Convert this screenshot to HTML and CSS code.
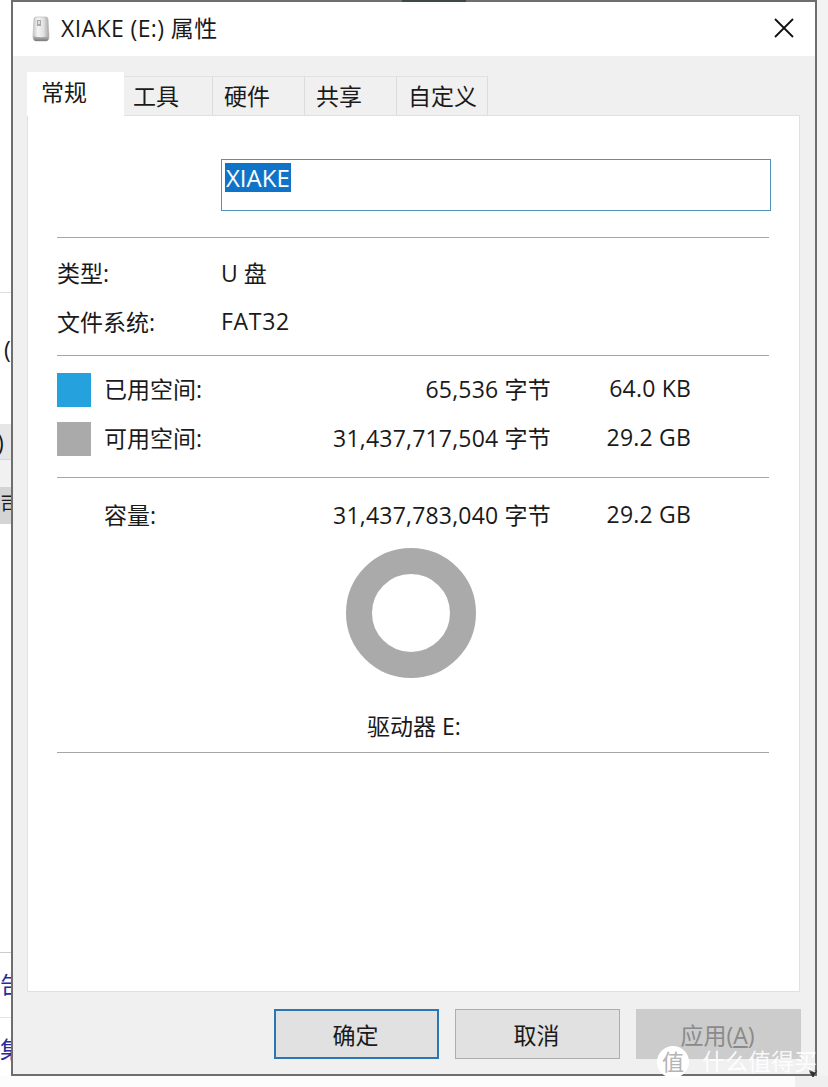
FILE: index.html
```html
<!DOCTYPE html>
<html lang="zh-CN">
<head>
    <meta charset="UTF-8">
    <meta name="viewport" content="width=device-width, initial-scale=1.0">
    <title>XIAKE (E:) 属性</title>
    <link rel="stylesheet" href="styles.css">
</head>
<body>
    <div class="page">
        <!-- Window behind the dialog, only its right edge shows -->
        <div class="behind">
            <div class="behind-row behind-top"></div>
            <div class="behind-row behind-paren">(</div>
            <div class="behind-row behind-band">)</div>
            <div class="behind-row behind-gap"></div>
            <div class="behind-row behind-grey">司</div>
            <div class="behind-row behind-white"></div>
            <div class="behind-row behind-link">告</div>
            <div class="behind-row behind-link">集</div>
        </div>

        <div class="dialog">
            <div class="titlebar">
                <svg class="drive-icon" width="20" height="26" viewBox="0 0 20 26">
                    <defs>
                        <linearGradient id="driveBody" x1="0" y1="0" x2="1" y2="0">
                            <stop offset="0" stop-color="#c4c4c4"/>
                            <stop offset="0.3" stop-color="#f4f4f4"/>
                            <stop offset="0.65" stop-color="#e2e2e2"/>
                            <stop offset="1" stop-color="#a6a6a6"/>
                        </linearGradient>
                        <linearGradient id="driveBase" x1="0" y1="0" x2="0" y2="1">
                            <stop offset="0" stop-color="#b8b8b8"/>
                            <stop offset="1" stop-color="#7c7c7c"/>
                        </linearGradient>
                    </defs>
                    <path d="M5 1h10q2 0 2 2l1 17q0 5-3 5H5q-3 0-3-5L3 3q0-2 2-2z" fill="url(#driveBody)" stroke="#b4b4b4" stroke-width="0.6"/>
                    <path d="M2.3 20q7.700 2.500 15.400 0q.3 5-2.700 5H5q-3 0-2.700-5z" fill="url(#driveBase)"/>
                    <path d="M6 4h4v6H6z" fill="#a9a9a9"/>
                    <path d="M7 5h2v3H7z" fill="#dedede"/>
                </svg>
                <span class="title">XIAKE (E:) 属性</span>
                <svg class="close-icon" width="20" height="20" viewBox="0 0 20 20">
                    <path d="M1 1l18 18M19 1L1 19" stroke="#111" stroke-width="1.8" fill="none"/>
                </svg>
            </div>

            <div class="tabs">
                <div class="tab tab-active">常规</div>
                <div class="tab tab-tools">工具</div>
                <div class="tab">硬件</div>
                <div class="tab">共享</div>
                <div class="tab tab-last">自定义</div>
            </div>

            <div class="panel">
                <div class="name-box"><span class="selected">XIAKE</span></div>
                <div class="divider first-divider"></div>

                <div class="info-row"><span class="label">类型:</span><span>U 盘</span></div>
                <div class="info-row"><span class="label">文件系统:</span><span class="fs-name">FAT32</span></div>
                <div class="divider second-divider"></div>

                <div class="space-rows">
                    <div class="space-row">
                        <span class="swatch swatch-used"></span>
                        <span class="space-name">已用空间:</span>
                        <span class="bytes">65,536 字节</span>
                        <span class="size">64.0 KB</span>
                    </div>
                    <div class="space-row">
                        <span class="swatch swatch-free"></span>
                        <span class="space-name">可用空间:</span>
                        <span class="bytes">31,437,717,504 字节</span>
                        <span class="size">29.2 GB</span>
                    </div>
                </div>
                <div class="divider third-divider"></div>

                <div class="space-row capacity-row">
                    <span></span>
                    <span class="space-name">容量:</span>
                    <span class="bytes">31,437,783,040 字节</span>
                    <span class="size">29.2 GB</span>
                </div>

                <div class="ring-wrap"><div class="ring"></div></div>
                <div class="drive-label">驱动器 E:</div>
                <div class="divider"></div>
            </div>

            <div class="buttons">
                <button class="btn btn-default" type="button">确定</button>
                <button class="btn" type="button">取消</button>
                <button class="btn btn-disabled" type="button">应用(<u>A</u>)</button>
            </div>
        </div>

        <div class="behind-right"></div>
    </div>
    <div class="behind-bottom"></div>

    <div class="top-sliver"></div>
    <svg class="corner-mark" width="8" height="8" viewBox="0 0 8 8">
        <path d="M0 1h8M1 2h6L4 7z" stroke="#333" stroke-width="1" fill="#333"/>
    </svg>
    <div class="watermark">
        <span class="watermark-badge">值</span>
        <span class="watermark-text">什么值得买</span>
    </div>
</body>
</html>
```

FILE: styles.css
```css
html, body {
    margin: 0;
    padding: 0;
}

body {
    position: relative;
    width: 828px;
    height: 1087px;
    overflow: hidden;
    background-color: #ffffff;
    color: #1a1a1a;
    font-family: "Open Sans", "Noto Sans CJK SC", sans-serif;
    font-size: 23px;
}

.page {
    display: flex;
    height: 1076px;
}

/* Background window */
.behind {
    width: 11px;
    flex-shrink: 0;
    overflow: hidden;
    white-space: nowrap;
}

.behind-row {
    box-sizing: border-box;
    padding-left: 4px;
}

.behind-top {
    height: 293px;
    border-bottom: 1px solid #dddddd;
}

.behind-paren {
    height: 131px;
    padding-top: 38px;
    line-height: 36px;
}

.behind-band {
    height: 36px;
    line-height: 36px;
    padding-left: 0;
    margin-left: -3px;
    background-color: #e6e6e6;
    border-bottom: 1px solid #d8d8d8;
}

.behind-gap {
    height: 27px;
    background-color: #f1f1f1;
}

.behind-grey {
    height: 37px;
    line-height: 36px;
    padding-left: 0;
    font-size: 20px;
    background-color: #d4d4d4;
}

.behind-white {
    height: 429px;
    border-bottom: 1px solid #cccccc;
}

.behind-link {
    height: 65px;
    line-height: 62px;
    padding-left: 0;
    color: #2a2a9c;
    border-bottom: 1px solid #e4e4e4;
}

.behind-right {
    flex: 1;
    background-color: #f3f3f3;
}

.behind-bottom {
    display: flex;
    justify-content: flex-end;
    height: 11px;
    background-color: #fcfcfc;
}

.behind-bottom::after {
    content: "";
    width: 33px;
    background-color: #efefef;
}

.top-sliver {
    position: absolute;
    left: 402px;
    top: 0;
    width: 64px;
    height: 2px;
    background-color: #3c4a44;
}

.corner-mark {
    position: absolute;
    left: 809px;
    top: 1070px;
}

/* Dialog */
.dialog {
    box-sizing: border-box;
    width: 806px;
    flex-shrink: 0;
    border: 2px solid #6e6e6e;
    background-color: #f0f0f0;
    display: flex;
    flex-direction: column;
}

.titlebar {
    height: 54px;
    display: flex;
    align-items: center;
    padding: 0 21px 0 18px;
    background-color: #ffffff;
    flex-shrink: 0;
}

.drive-icon {
    flex-shrink: 0;
    margin-right: 10px;
}

.title {
    flex: 1;
    margin-bottom: 4px;
    letter-spacing: 0.4px;
}

.close-icon {
    margin-bottom: 2px;
}

.tabs {
    display: flex;
    align-items: flex-end;
    height: 59px;
    padding-left: 14px;
    flex-shrink: 0;
}

.tab {
    box-sizing: border-box;
    width: 92px;
    height: 39px;
    padding-left: 11px;
    line-height: 38px;
    border-right: 1px solid #dcdcdc;
    border-top: 1px solid #e2e2e2;
}

.tab-active {
    width: 97px;
    height: 44px;
    padding-left: 14px;
    line-height: 40px;
    background-color: #ffffff;
    border: none;
    margin-bottom: -1px;
    position: relative;
}

.tab-tools {
    width: 89px;
    padding-left: 9px;
}

.tab-last {
    width: 91px;
}

.panel {
    box-sizing: border-box;
    height: 877px;
    margin: 0 15px 0 14px;
    padding: 43px 30px 0 29px;
    background-color: #ffffff;
    border: 1px solid #e0e0e0;
    flex-shrink: 0;
}

.name-box {
    box-sizing: border-box;
    height: 52px;
    margin: 0 -2px 0 164px;
    padding: 3px 3px 0;
    border: 1px solid #4f94b4;
    line-height: 28px;
    font-size: 24px;
}

.selected {
    display: inline-block;
    padding: 1px 1px 0;
    background-color: #0f74c8;
    color: #ffffff;
}

.divider {
    height: 1px;
    background-color: #a6a6a6;
}

.first-divider {
    margin: 26px 0 9px;
}

.second-divider {
    margin-top: 10px;
}

.third-divider {
    margin-top: 14px;
}

.info-row {
    display: flex;
    align-items: center;
    height: 49px;
}

.label {
    width: 164px;
    flex-shrink: 0;
}

.fs-name {
    letter-spacing: 0.7px;
}

.space-rows {
    padding-top: 9px;
}

.space-row {
    display: grid;
    grid-template-columns: 47px 121px 326px 140px;
    align-items: center;
    height: 49px;
}

.space-name, .bytes, .size {
    margin-bottom: 4px;
}

.bytes, .size {
    text-align: right;
    white-space: nowrap;
    letter-spacing: 0.2px;
}

.swatch {
    display: block;
    width: 34px;
    height: 34px;
}

.swatch-used {
    background-color: #25a1dd;
}

.swatch-free {
    background-color: #aaaaaa;
}

.capacity-row {
    margin-top: 13px;
}

.ring-wrap {
    display: flex;
    justify-content: center;
    padding: 8px 0 0;
    margin-left: -4px;
}

.ring {
    box-sizing: border-box;
    width: 130px;
    height: 130px;
    border: 26px solid #aaaaaa;
    border-radius: 50%;
}

.drive-label {
    height: 74px;
    line-height: 96px;
    text-align: center;
    margin-left: 2px;
}

.buttons {
    display: flex;
    justify-content: flex-end;
    gap: 16px;
    padding: 17px 14px 0 0;
}

.btn {
    box-sizing: border-box;
    width: 165px;
    height: 50px;
    padding: 0 2px 0 0;
    font-family: inherit;
    font-size: 23px;
    color: #1a1a1a;
    background-color: #e1e1e1;
    border: 1px solid #adadad;
    border-radius: 0;
}

.btn-default {
    border: 2px solid #2a76b5;
}

.btn-disabled {
    background-color: #cccccc;
    border-color: #cccccc;
    color: #8a8a8a;
}

/* Site watermark over the corner */
.watermark {
    position: absolute;
    left: 657px;
    top: 1042px;
    display: flex;
    align-items: center;
    gap: 13px;
    color: rgba(255, 255, 255, 0.9);
}

.watermark-badge {
    width: 32px;
    height: 32px;
    margin-top: 4px;
    line-height: 31px;
    text-align: center;
    font-size: 22px;
    border-radius: 50%;
    background-color: #ffffff;
    color: #b4b4b4;
}

.watermark-text {
    font-size: 23px;
    white-space: nowrap;
}
```
